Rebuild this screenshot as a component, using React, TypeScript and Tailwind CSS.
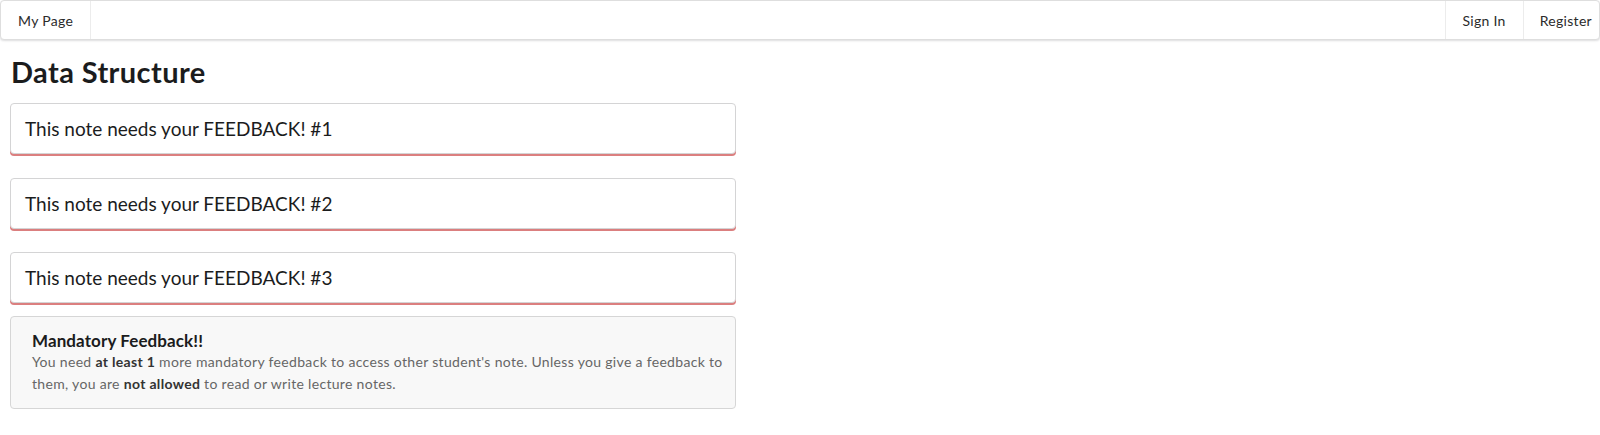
import React from "react";

const font = { fontFamily: "Lato, 'Noto Sans', sans-serif" };

function NoteSegment({ n }: { n: number }) {
  return (
    <div className="rounded-[4px] border border-[#d4d4d5] bg-white px-[14px] h-[51px] flex items-center shadow-[0_2px_0_0_#db7f7f]">
      <span className="text-[19px] leading-[22px] text-[#1b1c1d]">This note needs your FEEDBACK! #{n}</span>
    </div>
  );
}

export default function App() {
  return (
    <div style={font} className="min-h-[435px] bg-white text-[14px] text-[#1b1c1d] overflow-hidden">
      <div className="flex h-[40px] items-stretch border border-[#dedede] rounded-[4px] bg-white shadow-[0_1px_2px_0_rgba(34,36,38,0.15)]">
        <div className="flex items-center px-[17px] border-r border-[#ececec] text-[14px] tracking-[0.3px] text-[#2b2b2b]">My Page</div>
        <div className="flex-1" />
        <div className="flex items-center pl-[16px] pr-[17px] border-l border-[#ececec] text-[14px] tracking-[0.3px] text-[#2b2b2b]">Sign In</div>
        <div className="flex items-center pl-[16px] pr-[7px] border-l border-[#ececec] text-[14px] tracking-[0.3px] text-[#2b2b2b]">Register</div>
      </div>
      <div className="pl-[10px] w-[736px]">
        <h1 className="mt-[14px] text-[29px] leading-[36px] font-bold tracking-[0.4px] text-[#1b1c1d] pl-[1px]">Data Structure</h1>
        <div className="mt-[13px]">
          <NoteSegment n={1} />
        </div>
        <div className="mt-[24px]">
          <NoteSegment n={2} />
        </div>
        <div className="mt-[23px]">
          <NoteSegment n={3} />
        </div>
        <div className="mt-[13px] rounded-[4px] border border-[#d6d6d6] bg-[#f8f8f8] pl-[21px] pr-[12px] pt-[14px] h-[93px]">
          <div className="text-[17px] leading-[20px] font-bold tracking-[0.1px] text-[#1b1c1d]">Mandatory Feedback!!</div>
          <p className="text-[14px] leading-[22px] tracking-[0.32px] text-[#666666]">
            You need <b className="text-[#333333]">at least 1</b> more mandatory feedback to access other student's note. Unless you give a feedback to them, you are <b className="text-[#333333]">not allowed</b> to read or write lecture notes.
          </p>
        </div>
      </div>
    </div>
  );
}
